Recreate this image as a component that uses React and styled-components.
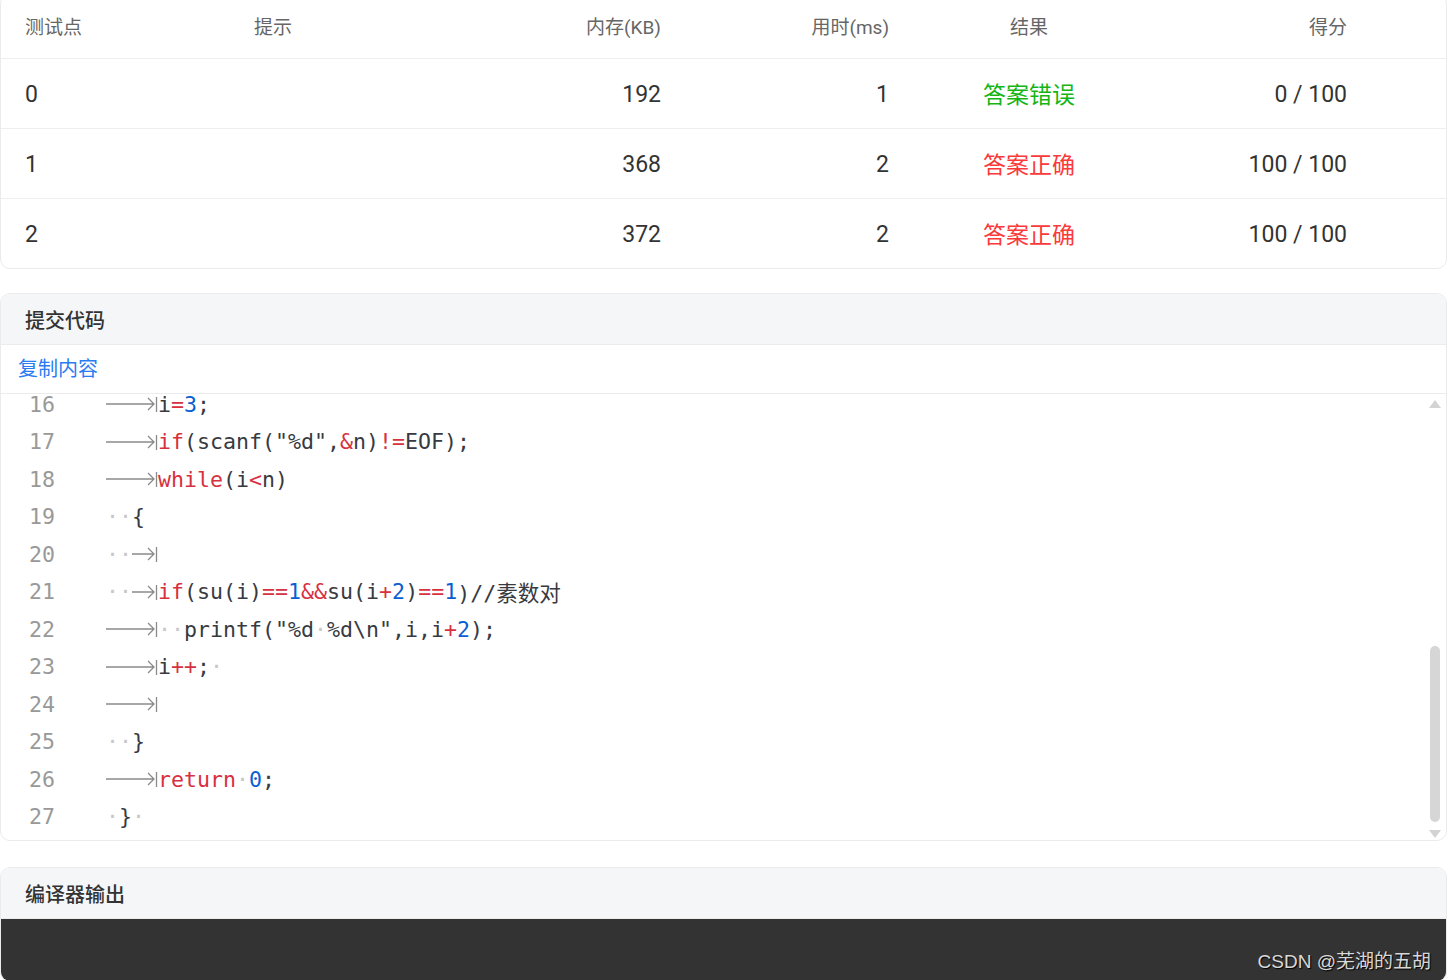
import React, { useLayoutEffect, useRef } from "react";
import styled, { createGlobalStyle } from "styled-components";

const GlobalStyle = createGlobalStyle`
  html, body {
    margin: 0;
    padding: 0;
    background: #fff;
    font-family: Roboto, "Noto Sans CJK SC", sans-serif;
    overflow: hidden;
  }
`;

const cases = [
  { id: 0, mem: 192, time: 1, ok: false, score: "0 / 100" },
  { id: 1, mem: 368, time: 2, ok: true, score: "100 / 100" },
  { id: 2, mem: 372, time: 2, ok: true, score: "100 / 100" },
];

// T = tab marker, D = space dot, [kind, text] = token
const code = [
  [["t", "#include<stdio.h>"]],
  [["t", "#include<math.h>"]],
  [["k", "int"], "D", ["t", "su(int"], "D", ["t", "n)"]],
  [["t", "{"]],
  ["T", ["k", "int"], "D", ["t", "k;"]],
  ["T", ["k", "for"], ["t", "(k"], ["o", "="], ["n", "2"], ["t", ";k"], ["o", "<="], ["t", "sqrt(n);k"], ["o", "++"], ["t", ")"]],
  ["T", "T", ["k", "if"], ["t", "(n"], ["o", "%"], ["t", "k"], ["o", "=="], ["n", "0"], ["t", ")"], ["k", "return"], "D", ["n", "0"], ["t", ";"]],
  ["T", ["k", "return"], "D", ["n", "1"], ["t", ";"]],
  [["t", "}"]],
  [],
  [["k", "int"], "D", ["t", "main()"]],
  [["t", "{"]],
  ["T", ["k", "int"], "D", ["t", "n,i;"]],
  ["T"],
  ["T"],
  ["T", ["t", "i"], ["o", "="], ["n", "3"], ["t", ";"]],
  ["T", ["k", "if"], ["t", '(scanf("%d",'], ["o", "&"], ["t", "n)"], ["o", "!="], ["t", "EOF);"]],
  ["T", ["k", "while"], ["t", "(i"], ["o", "<"], ["t", "n)"]],
  ["D", "D", ["t", "{"]],
  ["D", "D", "T2"],
  ["D", "D", "T2", ["k", "if"], ["t", "(su(i)"], ["o", "=="], ["n", "1"], ["o", "&&"], ["t", "su(i"], ["o", "+"], ["n", "2"], ["t", ")"], ["o", "=="], ["n", "1"], ["t", ")//素数对"]],
  ["T", "D", "D", ["t", 'printf("%d'], "D", ["t", '%d\\n",i,i'], ["o", "+"], ["n", "2"], ["t", ");"]],
  ["T", ["t", "i"], ["o", "++"], ["t", ";"], "D"],
  ["T"],
  ["D", "D", ["t", "}"]],
  ["T", ["k", "return"], "D", ["n", "0"], ["t", ";"]],
  ["D", ["t", "}"], "D"],
];

function TabMark({ chars }) {
  const w = chars * 13;
  return (
    <Tab $w={w}>
      <svg width={w} height="20" viewBox={`0 0 ${w} 20`}>
        <path
          d={`M0 10 H${w - 4} M${w - 10} 4 L${w - 4} 10 L${w - 10} 16 M${w - 1.5} 3 V18`}
          stroke="#8a8a8a"
          strokeWidth="1.3"
          fill="none"
        />
      </svg>
    </Tab>
  );
}

function CodeLine({ parts }) {
  return parts.map((p, i) => {
    if (p === "T") return <TabMark key={i} chars={4} />;
    if (p === "T2") return <TabMark key={i} chars={2} />;
    if (p === "D") return <Dot key={i}>·</Dot>;
    return (
      <Tok key={i} $kind={p[0]}>
        {p[1]}
      </Tok>
    );
  });
}

export default function App() {
  const scrollRef = useRef(null);
  useLayoutEffect(() => {
    if (scrollRef.current) scrollRef.current.scrollTop = 571;
  }, []);

  return (
    <Page>
      <GlobalStyle />
      <Card>
        <Row $head>
          <Cell>测试点</Cell>
          <Cell>提示</Cell>
          <Cell $align="right">内存(KB)</Cell>
          <Cell $align="right">用时(ms)</Cell>
          <Cell $align="center">结果</Cell>
          <Cell $align="right">得分</Cell>
        </Row>
        {cases.map((c) => (
          <Row key={c.id}>
            <Cell>{c.id}</Cell>
            <Cell />
            <Cell $align="right">{c.mem}</Cell>
            <Cell $align="right">{c.time}</Cell>
            <Cell $align="center">
              <Verdict $ok={c.ok}>{c.ok ? "答案正确" : "答案错误"}</Verdict>
            </Cell>
            <Cell $align="right">{c.score}</Cell>
          </Row>
        ))}
      </Card>

      <Card>
        <PanelTitle>提交代码</PanelTitle>
        <CopyBar>
          <CopyLink>复制内容</CopyLink>
        </CopyBar>
        <CodeArea>
          <CodeScroll ref={scrollRef}>
            {code.map((parts, i) => (
              <Line key={i}>
                <LineNo>{i + 1}</LineNo>
                <LineCode>
                  <CodeLine parts={parts} />
                </LineCode>
              </Line>
            ))}
          </CodeScroll>
          <Scrollbar>
            <Arrow $up />
            <Track>
              <Thumb />
            </Track>
            <Arrow />
          </Scrollbar>
        </CodeArea>
      </Card>

      <Card $extraTop>
        <PanelTitle>编译器输出</PanelTitle>
        <Output>
          <Watermark>CSDN @芜湖的五胡</Watermark>
        </Output>
      </Card>
    </Page>
  );
}

const Page = styled.div`
  width: 1448px;
  display: flex;
  flex-direction: column;
  gap: 24px;
  margin-top: -6px;
`;

const Card = styled.div`
  width: 1447px;
  box-sizing: border-box;
  border: 1px solid #ebebeb;
  border-radius: 10px;
  overflow: hidden;
  background: #fff;
  margin-top: ${(p) => (p.$extraTop ? 2 : 0)}px;
`;

const Row = styled.div`
  display: grid;
  grid-template-columns: 229px 227px 228px 228px 232px 226px 1fr;
  height: ${(p) => (p.$head ? 63 : 70)}px;
  align-items: center;
  border-top: ${(p) => (p.$head ? "none" : "1px solid #eeeeee")};
  box-sizing: border-box;
  color: ${(p) => (p.$head ? "#666" : "#333")};
  font-size: ${(p) => (p.$head ? 19 : 23)}px;
  padding: ${(p) => (p.$head ? "0 0 3px" : "2px 0 0")};
`;

const Cell = styled.div`
  padding: 0 24px;
  text-align: ${(p) => p.$align || "left"};
  white-space: nowrap;
`;

const Verdict = styled.span`
  display: inline-block;
  margin-top: -4px;
  color: ${(p) => (p.$ok ? "#fa3a3a" : "#14b514")};
`;

const PanelTitle = styled.div`
  height: 50px;
  display: flex;
  align-items: center;
  padding: 0 24px;
  background: #f5f6f8;
  border-bottom: 1px solid #ececec;
  font-size: 20px;
  font-weight: 500;
  color: #333;
`;

const CopyBar = styled.div`
  height: 49px;
  display: flex;
  align-items: center;
  padding: 0 0 3px 17px;
  box-sizing: border-box;
  border-bottom: 1px solid #ececec;
`;

const CopyLink = styled.span`
  color: #2a7cf0;
  font-size: 20px;
  cursor: pointer;
`;

const CodeArea = styled.div`
  display: flex;
  height: 446px;
`;

const CodeScroll = styled.div`
  flex: 1;
  overflow-y: scroll;
  scrollbar-width: none;
  padding-bottom: 12px;
  &::-webkit-scrollbar {
    display: none;
  }
`;

const Line = styled.div`
  display: flex;
  height: 37.5px;
  align-items: center;
  font-family: "DejaVu Sans Mono", "Noto Sans CJK SC", monospace;
  font-size: 21.6px;
  white-space: pre;
`;

const LineNo = styled.span`
  width: 26px;
  margin-left: 28px;
  margin-right: 51px;
  text-align: right;
  color: #999;
`;

const LineCode = styled.span`
  display: flex;
  align-items: center;
  color: #383a42;
`;

const Tok = styled.span`
  color: ${(p) =>
    p.$kind === "k" || p.$kind === "o"
      ? "#d7303f"
      : p.$kind === "n"
      ? "#0b5fd0"
      : "#383a42"};
`;

const Dot = styled.span`
  width: 13px;
  text-align: center;
  color: #c8c8c8;
`;

const Tab = styled.span`
  display: inline-flex;
  align-items: center;
  width: ${(p) => p.$w}px;
`;

const Scrollbar = styled.div`
  width: 22px;
  display: flex;
  flex-direction: column;
  align-items: center;
  padding: 6px 0 2px;
  box-sizing: border-box;
`;

const Arrow = styled.div`
  width: 0;
  height: 0;
  border-left: 6px solid transparent;
  border-right: 6px solid transparent;
  ${(p) =>
    p.$up
      ? "border-bottom: 8px solid #d3d3d3;"
      : "border-top: 8px solid #d3d3d3;"}
`;

const Track = styled.div`
  flex: 1;
  display: flex;
  flex-direction: column;
  justify-content: flex-end;
  padding: 4px 0 8px;
`;

const Thumb = styled.div`
  width: 10px;
  height: 176px;
  border-radius: 5px;
  background: #d6d6d6;
`;

const Output = styled.div`
  height: 62px;
  background: #333333;
  display: flex;
  align-items: flex-end;
  justify-content: flex-end;
  padding: 0 15px 8px 0;
  box-sizing: border-box;
`;

const Watermark = styled.span`
  font-family: "Liberation Sans", "Noto Sans CJK SC", sans-serif;
  font-size: 19px;
  color: #d8d8d8;
  text-shadow: 1px 1px 1px #000;
`;
